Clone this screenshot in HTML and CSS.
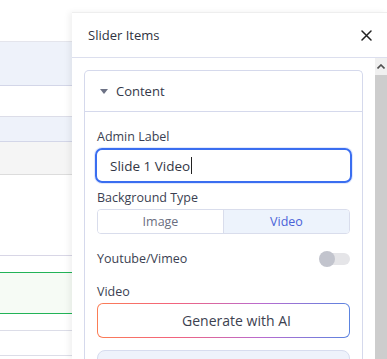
FILE: index.html
```html
<!DOCTYPE html>
<html lang="en">
<head>
    <meta charset="UTF-8">
    <meta name="viewport" content="width=device-width, initial-scale=1.0">
    <title>Slider Items</title>

    <link rel="stylesheet" href="styles.css">
</head>
<body>
    <!-- Page behind the drawer -->
    <div class="page">
        <div class="row row-top"></div>
        <div class="row row-blue row-h43"></div>
        <div class="row row-h31"></div>
        <div class="row row-blue row-h24"></div>
        <div class="row row-gray row-h33"></div>
        <div class="row row-h81"></div>
        <div class="row row-green-top"></div>
        <div class="row row-green"></div>
        <div class="row row-h17"></div>
        <div class="row row-h25"></div>
    </div>

    <!-- Drawer -->
    <aside class="drawer">
        <div class="drawer-header">
            <span class="drawer-title">Slider Items</span>
            <button class="close-btn" aria-label="Close">
                <svg width="11" height="11" viewBox="0 0 11 11"><path d="M1 1L10 10M10 1L1 10" stroke="#222" stroke-width="1.5" stroke-linecap="round"/></svg>
            </button>
        </div>

        <div class="drawer-body">
            <div class="drawer-content">
                <div class="card">
                    <div class="card-header">
                        <span class="caret"></span>
                        <span>Content</span>
                    </div>
                    <div class="card-body">
                        <label class="field-label" for="adminLabel">Admin Label</label>
                        <div class="text-input" id="adminLabel">Slide 1 Video<span class="cursor"></span></div>

                        <div class="field-label mt6">Background Type</div>
                        <div class="segmented">
                            <button>Image</button>
                            <button class="active">Video</button>
                        </div>

                        <div class="switch-row">
                            <span class="field-label">Youtube/Vimeo</span>
                            <span class="switch"><span class="knob"></span></span>
                        </div>

                        <div class="field-label mt14">Video</div>
                        <div class="ai-border">
                            <button class="ai-btn">Generate with AI</button>
                        </div>

                        <div class="upload-box"></div>
                    </div>
                </div>
            </div>

            <!-- Scrollbar -->
            <div class="scrollbar">
                <div class="scroll-arrow">
                    <svg width="8" height="5" viewBox="0 0 8 5"><path d="M0.5 4.5L4 1L7.5 4.5" fill="none" stroke="#505050" stroke-width="1.6"/></svg>
                </div>
                <div class="scroll-thumb"></div>
            </div>
        </div>
    </aside>
</body>
</html>
```

FILE: styles.css
```css
html, body {
    height: 100%;
    margin: 0;
    overflow: hidden;
    font-family: "Open Sans", "Noto Sans", Arial, sans-serif;
    background: #fff;
}

/* Background table */
.page {
    width: 100%;
}

.row {
    border-bottom: 1px solid #dcdde8;
    box-sizing: border-box;
}

.row-top { height: 42px; border-bottom-color: #e4e5ec; }
.row-blue { background: #eef2fa; border-bottom-color: #d3d6e8; }
.row-gray { background: #f5f5f5; border-bottom-color: #dcdcdc; }
.row-h43 { height: 44px; }
.row-h31 { height: 31px; }
.row-h24 { height: 25px; }
.row-h33 { height: 33px; }
.row-h81 { height: 81px; border-bottom-color: #d8d6e6; }
.row-green-top { height: 17px; border-bottom: 1px solid #22b357; }
.row-green { height: 41px; background: #f6fbf5; border-bottom: 1px solid #22b357; }
.row-h17 { height: 17px; }
.row-h25 { height: 25px; }

/* Drawer */
.drawer {
    position: absolute;
    top: 12px;
    left: 72px;
    right: 0;
    bottom: 0;
    background: #fff;
    box-shadow: -3px 0 6px rgba(0, 0, 0, 0.06);
    border-top: 1px solid #eeeeee;
    display: flex;
    flex-direction: column;
    overflow: hidden;
}

.drawer-header {
    height: 44px;
    flex-shrink: 0;
    border-bottom: 1px solid #dcdfee;
    display: flex;
    align-items: center;
    justify-content: space-between;
    padding: 0 15px 0 16px;
}

.drawer-title {
    font-size: 13px;
    color: #2f3342;
}

.close-btn {
    border: none;
    background: none;
    padding: 0;
    display: flex;
    cursor: pointer;
}

.drawer-body {
    flex: 1;
    display: flex;
    min-height: 0;
}

.drawer-content {
    flex: 1;
    padding: 12px 12px 0 12px;
    overflow: hidden;
}

.scrollbar {
    width: 12px;
    background: #f0f0f0;
    display: flex;
    flex-direction: column;
}

.scroll-arrow {
    height: 17px;
    display: flex;
    align-items: center;
    justify-content: center;
}

.scroll-thumb {
    flex: 1;
    background: #cdcdcd;
}

/* Card */
.card {
    border: 1px solid #d5d9ec;
    border-bottom: none;
    border-radius: 5px 5px 0 0;
    height: 100%;
    box-sizing: border-box;
}

.card-header {
    height: 40px;
    border-bottom: 1px solid #d5d9ec;
    display: flex;
    align-items: center;
    gap: 8px;
    padding-left: 15px;
    font-size: 13px;
    color: #343849;
}

.caret {
    width: 0;
    height: 0;
    border-left: 4.5px solid transparent;
    border-right: 4.5px solid transparent;
    border-top: 5px solid #6d7285;
    margin-top: 1px;
}

.card-body {
    padding: 16px 12px 0 12px;
    display: flex;
    flex-direction: column;
}

.field-label {
    display: block;
    font-size: 12.5px;
    line-height: 18px;
    color: #3b3f52;
    margin-bottom: 2px;
}

.mt6 { margin-top: 6px; }
.mt14 { margin-top: 15px; }

.text-input {
    height: 35px;
    box-sizing: border-box;
    margin: 0 -2px;
    border: 2px solid #3a6ef0;
    border-radius: 7px;
    box-shadow: 0 0 0 1px rgba(58, 110, 240, 0.15);
    padding-left: 13px;
    display: flex;
    align-items: center;
    font-size: 13.5px;
    color: #333745;
}

.cursor {
    display: inline-block;
    width: 1px;
    height: 17px;
    background: #222;
    margin-left: 1px;
}

.segmented {
    display: flex;
    height: 25px;
    border: 1px solid #d9ddec;
    border-radius: 4px;
    overflow: hidden;
    box-sizing: border-box;
}

.segmented button {
    flex: 1;
    border: none;
    background: #fff;
    font-family: inherit;
    font-size: 12.5px;
    color: #6a6e80;
    padding: 0;
}

.segmented button + button {
    border-left: 1px solid #d9ddec;
}

.segmented button.active {
    background: #edf3fc;
    color: #4a63d8;
}

.switch-row {
    margin-top: 16px;
    height: 18px;
    display: flex;
    align-items: center;
    justify-content: space-between;
}

.switch-row .field-label {
    margin: 0;
}

.switch {
    position: relative;
    width: 30px;
    height: 12px;
    border-radius: 6px;
    background: #e5e5e8;
}

.knob {
    position: absolute;
    left: -1px;
    top: -2px;
    width: 16px;
    height: 16px;
    border-radius: 50%;
    background: #c2c4cd;
}

.ai-border {
    padding: 1px;
    border-radius: 6px;
    background: linear-gradient(90deg, #fb7d55, #f3637c 30%, #b96bcf 65%, #5b84e0);
    flex-shrink: 0;
}

.ai-btn {
    display: block;
    width: 100%;
    height: 33px;
    border: none;
    border-radius: 5px;
    background: #fff;
    font-family: inherit;
    font-size: 14px;
    color: #3c4150;
    padding: 0 0 0 26px;
    cursor: pointer;
}

.upload-box {
    margin-top: 12px;
    height: 40px;
    flex-shrink: 0;
    border: 1px solid #d7dcef;
    border-radius: 8px;
    background: #eef2fb;
}
```
